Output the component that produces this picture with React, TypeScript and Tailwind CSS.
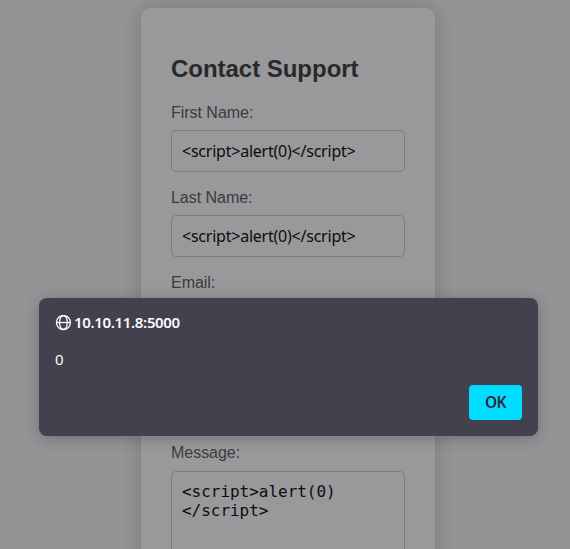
function Field({ label, value }: { label: string; value: string }) {
  return (
    <label className="mb-4 flex flex-col">
      <span className="mb-2 h-[19px] text-[16px] leading-[19px] tracking-[-0.03px] text-[#3b3b3f]">{label}</span>
      <span className="flex h-[42px] items-center rounded-[5px] border border-[#7d7c80] px-2.5 font-['Noto_Sans',sans-serif] text-[16px] tracking-[-0.23px] text-[#0d0c0f]">
        <span className="whitespace-nowrap">{value}</span>
      </span>
    </label>
  );
}

function GlobeIcon() {
  return (
    <svg className="mr-[3px] size-4 shrink-0" viewBox="0 0 16 16" fill="none" stroke="#fbfbfe" strokeWidth="1.3">
      <circle cx="8.4" cy="7.5" r="7" />
      <ellipse cx="8.4" cy="7.5" rx="3.9" ry="7" />
      <path d="M1.4 7.5h14" />
    </svg>
  );
}

export default function App() {
  return (
    <div className="relative h-[549px] w-[570px] overflow-hidden bg-[#949396] font-['Liberation_Sans',Arial,sans-serif]">
      <main className="ml-[141px] mt-2 flex h-[640px] w-[294px] flex-col rounded-[10px] bg-[#99989a] px-[30px] pt-[47px] shadow-[0_0_20px_rgba(15,15,18,0.2)]">
        <h1 className="mb-[20px] h-[28px] whitespace-nowrap text-[24px] font-bold leading-[28px] tracking-[-0.03px] text-[#29282b]">Contact Support</h1>
        <Field label="First Name:" value="<script>alert(0)</script>" />
        <Field label="Last Name:" value="<script>alert(0)</script>" />
        <Field label="Email:" value="" />
        <Field label="Subject:" value="" />
        <label className="flex flex-col">
          <span className="mb-[9px] h-[19px] text-[16px] leading-[19px] tracking-[-0.03px] text-[#3b3b3f]">Message:</span>
          <span className="h-[150px] rounded-[5px] border border-[#7d7c80] p-2.5 font-['DejaVu_Sans_Mono',monospace] text-[16px] leading-[19px] tracking-[-0.03px] text-[#0d0c0f]">
            {"<script>alert(0)"}
            <br />
            {"</script>"}
          </span>
        </label>
      </main>
      <div
        role="dialog"
        className="absolute left-[39px] top-[298px] flex h-[138px] w-[499px] flex-col rounded-lg bg-[#42414d] px-4 pb-4 pt-[14px] font-['Noto_Sans',sans-serif] text-[15px] text-[#fbfbfe] shadow-[0_2px_14px_rgba(30,30,35,0.3)]"
      >
        <div className="flex h-[21px] items-center font-semibold">
          <GlobeIcon />
          <span className="text-[15px] tracking-[-0.34px]">10.10.11.8:5000</span>
        </div>
        <p className="mt-4 h-[21px] text-[15px] leading-[21px]">0</p>
        <button className="mt-auto h-[35px] w-[53px] self-end rounded bg-[#00ddff] text-[15.5px] font-semibold tracking-[-0.7px] text-[#2b2a33]">OK</button>
      </div>
    </div>
  );
}
